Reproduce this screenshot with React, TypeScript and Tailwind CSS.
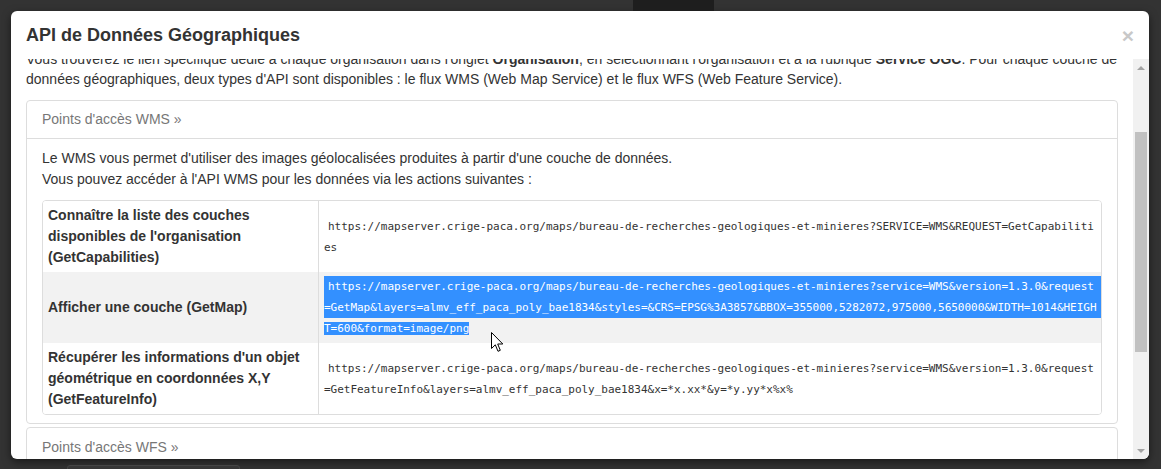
import React from 'react';

const URL_BASE = 'https://mapserver.crige-paca.org/maps/bureau-de-recherches-geologiques-et-minieres';

interface Row {
  label: string;
  lines: string[];
  striped?: boolean;
  selected?: boolean;
}

const rows: Row[] = [
  {
    label: "Connaître la liste des couches disponibles de l'organisation (GetCapabilities)",
    lines: [URL_BASE + '?SERVICE=WMS&REQUEST=GetCapabiliti', 'es'],
  },
  {
    label: 'Afficher une couche (GetMap)',
    lines: [
      URL_BASE + '?service=WMS&version=1.3.0&request',
      '=GetMap&layers=almv_eff_paca_poly_bae1834&styles=&CRS=EPSG%3A3857&BBOX=355000,5282072,975000,5650000&WIDTH=1014&HEIGH',
      'T=600&format=image/png',
    ],
    striped: true,
    selected: true,
  },
  {
    label: "Récupérer les informations d'un objet géométrique en coordonnées X,Y (GetFeatureInfo)",
    lines: [
      URL_BASE + '?service=WMS&version=1.3.0&request',
      '=GetFeatureInfo&layers=almv_eff_paca_poly_bae1834&x=*x.xx*&y=*y.yy*x%x%',
    ],
  },
];

function UrlCell({ lines, selected }: { lines: string[]; selected?: boolean }) {
  return (
    <div className="flex flex-col justify-center self-stretch border-l border-[#ddd] py-[4px] pl-[5px] font-['DejaVu_Sans_Mono',monospace] text-[11px] leading-[21px] tracking-[-0.02px] text-[#333]">
      {lines.map((line, i) => {
        const last = i === lines.length - 1;
        if (selected && !last) {
          return (
            <div key={i} className={`bg-[#3390ff] whitespace-nowrap text-white ${i === 0 ? 'pl-[4px]' : ''}`}>
              {line}
            </div>
          );
        }
        if (selected && last) {
          return (
            <div key={i} className="whitespace-nowrap">
              <span className="bg-[#3390ff] text-white">{line}</span>
            </div>
          );
        }
        return (
          <div key={i} className={`whitespace-nowrap ${i === 0 ? 'pl-[4px]' : ''}`}>
            {line}
          </div>
        );
      })}
    </div>
  );
}

function Cursor() {
  return (
    <svg className="pointer-events-none absolute left-[491px] top-[332px]" width="13" height="21" viewBox="0 0 13 21">
      <path d="M0.5 0.5 L0.5 16.5 L4.3 12.8 L7 19.3 L9.3 18.3 L6.7 12 L11.8 12 Z" fill="#fff" stroke="#000" strokeWidth="1" strokeLinejoin="round" />
    </svg>
  );
}

export default function App() {
  return (
    <div className="relative h-[469px] w-[1161px] overflow-hidden bg-[#333] font-['Liberation_Sans',Arial,sans-serif]">
      {/* page behind the backdrop */}
      <div className="absolute left-[633px] top-0 h-[11px] w-[81px] bg-[#1e1e1e]" />
      <div className="absolute left-[67px] top-[465px] h-[8px] w-[173px] rounded-[3px] border border-[#444] bg-[#363636]" />

      {/* Modal */}
      <div className="ml-[11px] mt-[11px] flex h-[448px] w-[1138px] flex-col overflow-hidden rounded-[6px] bg-white shadow-[0_3px_9px_rgba(0,0,0,0.5)]">
        {/* Header */}
        <div className="flex h-[48px] shrink-0 items-center justify-between pl-[15px] pr-[15px]">
          <h4 className="text-[18px] font-bold leading-none text-[#333]">API de Données Géographiques</h4>
          <span className="text-[21px] font-bold leading-none text-[#c8c8c8]">×</span>
        </div>

        {/* Body */}
        <div className="flex min-h-0 flex-1">
          <div className="min-w-0 flex-1 overflow-hidden">
            <div className="-mt-[10px] px-[15px] text-[14px] text-[#333]">
              <p className="whitespace-nowrap leading-[20px]">
                Vous trouverez le lien spécifique dédié à chaque organisation dans l'onglet <b>Organisation</b>, en sélectionnant l'organisation et à la rubrique <b>Service OGC</b>. Pour chaque couche de
                <br />
                données géographiques, deux types d'API sont disponibles : le flux WMS (Web Map Service) et le flux WFS (Web Feature Service).
              </p>

              {/* WMS panel */}
              <div className="mt-[11px] rounded-[4px] border border-[#ddd]">
                <div className="flex h-[38px] items-center border-b border-[#ddd] px-[15px] text-[#777]">Points d'accès WMS »</div>
                <div className="px-[15px] pb-[8px] pt-[9px]">
                  <p className="leading-[21px]">
                    Le WMS vous permet d'utiliser des images géolocalisées produites à partir d'une couche de données.
                    <br />
                    Vous pouvez accéder à l'API WMS pour les données via les actions suivantes :
                  </p>
                  <div className="mt-[10px] overflow-hidden rounded-[4px] border border-[#ddd]">
                    {rows.map((row) => (
                      <div
                        key={row.label}
                        className={`grid grid-cols-[275px_1fr] items-center ${row.striped ? 'bg-[#f2f2f2]' : 'bg-white'}`}
                      >
                        <div className="py-[4px] pl-[5px] pr-[8px] font-bold leading-[21px] text-[#333]">{row.label}</div>
                        <UrlCell lines={row.lines} selected={row.selected} />
                      </div>
                    ))}
                  </div>
                </div>
              </div>

              {/* WFS panel */}
              <div className="mt-[3px] rounded-[4px] border border-[#ddd]">
                <div className="flex h-[38px] items-center px-[15px] text-[#777]">Points d'accès WFS »</div>
              </div>
            </div>
          </div>

          {/* Scrollbar */}
          <div className="flex w-[16px] shrink-0 flex-col items-center bg-[#f1f1f1]">
            <div className="flex h-[17px] items-center justify-center">
              <div className="h-0 w-0 border-x-[4px] border-b-[4px] border-x-transparent border-b-[#a3a3a3]" />
            </div>
            <div className="flex-1 self-stretch px-[2px] pt-[56px]">
              <div className="h-[220px] bg-[#c1c1c1]" />
            </div>
            <div className="flex h-[17px] items-center justify-center">
              <div className="h-0 w-0 border-x-[4px] border-t-[4px] border-x-transparent border-t-[#a3a3a3]" />
            </div>
          </div>
        </div>
      </div>

      <Cursor />
    </div>
  );
}
